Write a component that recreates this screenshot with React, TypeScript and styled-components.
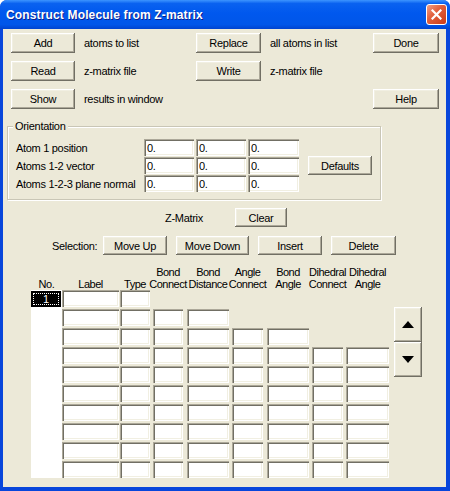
import React from 'react';
import styled, { createGlobalStyle } from 'styled-components';

const FONT = `"Liberation Sans", Arial, sans-serif`;

const GlobalStyle = createGlobalStyle`
  html, body {
    margin: 0;
    padding: 0;
    background: #ffffff;
  }
  body {
    font-family: ${FONT};
    font-size: 11px;
    color: #000;
  }
`;

const Window = styled.div`
  width: 450px;
  height: 491px;
  display: flex;
  flex-direction: column;
  border-radius: 7px 7px 0 0;
  overflow: hidden;
  background: #0846db;
`;

const TitleBar = styled.div`
  height: 29px;
  flex: none;
  display: flex;
  align-items: center;
  padding: 0 3px 0 6px;
  box-sizing: border-box;
  background: linear-gradient(180deg, #3d95ff 0%, #0a62f0 12%, #0058ee 45%, #0056e9 85%, #0043cf 100%);
`;

const TitleText = styled.span`
  flex: 1;
  color: #fff;
  font: bold 12px ${FONT};
  letter-spacing: 0.15px;
  text-shadow: 1px 1px 0 #0f1f8c;
`;

const CloseBox = styled.div`
  width: 21px;
  height: 21px;
  box-sizing: border-box;
  border: 1px solid #fff;
  border-radius: 3px;
  background: linear-gradient(135deg, #f0a088 0%, #e2623f 40%, #cc3a14 100%);
  display: flex;
  align-items: center;
  justify-content: center;
`;

const Frame = styled.div`
  flex: 1;
  display: flex;
  border-style: solid;
  border-color: #0846db;
  border-width: 0 4px 4px 3px;
`;

const Body = styled.div`
  flex: 1;
  background: #ece9d8;
  display: flex;
  flex-direction: column;
  letter-spacing: -0.3px;
`;

const raised = `
  background: #ece9d8;
  border: none;
  box-shadow: inset -1px -1px 0 #716f64, inset 1px 1px 0 #ffffff,
    inset -2px -2px 0 #aca899, inset 2px 2px 0 #f1efe2;
`;

const sunken = `
  background: #ffffff;
  box-shadow: inset 1px 1px 0 #aca899, inset 2px 2px 0 #716f64,
    inset -1px -1px 0 #ffffff, inset -2px -2px 0 #f1efe2;
`;

const Button = styled.button<{ $w?: number; $h?: number }>`
  ${raised}
  width: ${p => (p.$w ? `${p.$w}px` : '100%')};
  height: ${p => p.$h ?? 20}px;
  padding: 0;
  font: 11px ${FONT};
  letter-spacing: -0.3px;
  color: #000;
  display: flex;
  align-items: center;
  justify-content: center;
`;

const TopGrid = styled.div`
  display: grid;
  grid-template-columns: 64px 121px 65px 112px 66px;
  grid-auto-rows: 20px;
  row-gap: 8px;
  align-items: center;
  margin: 4px 0 0 8px;
`;

const Hint = styled.span`
  padding-left: 9px;
  white-space: nowrap;
`;

const GroupBox = styled.div`
  position: relative;
  box-sizing: border-box;
  width: 374px;
  height: 74px;
  margin: 17px 0 0 4px;
  padding: 12px 0 0 8px;
  border: 1px solid #c9c6b6;
  box-shadow: inset 1px 1px 0 #ffffff, 1px 1px 0 #ffffff;
`;

const Legend = styled.span`
  position: absolute;
  top: -7px;
  left: 5px;
  padding: 0 2px;
  line-height: 13px;
  background: #ece9d8;
`;

const OrientGrid = styled.div`
  display: grid;
  grid-template-columns: 126px 50px 50px 51px 71px;
  column-gap: 2px;
  grid-auto-rows: 17px;
  row-gap: 1px;
  align-items: center;
`;

const FieldLabel = styled.span`
  white-space: nowrap;
`;

const Field = styled.input`
  ${sunken}
  border: none;
  box-sizing: border-box;
  width: 100%;
  height: 17px;
  margin: 0;
  padding: 1px 0 0 3px;
  font: 11px ${FONT};
  letter-spacing: -0.3px;
  color: #000;
  outline: none;
`;

const DefaultsSlot = styled.div`
  grid-column: 5;
  grid-row: 2;
  display: flex;
  justify-content: flex-end;
`;

const ZRow = styled.div`
  display: flex;
  align-items: center;
  margin: 8px 0 0 162px;
`;

const ZLabel = styled.span`
  width: 70px;
`;

const SelRow = styled.div`
  display: flex;
  align-items: center;
  gap: 9px;
  margin: 9px 0 0 49px;
`;

const SelLabel = styled.span`
  width: 42px;
`;

const MatrixArea = styled.div`
  display: flex;
  align-items: flex-start;
  margin: 12px 0 0 28px;
`;

const NoColumn = styled.div`
  width: 31px;
  display: flex;
  flex-direction: column;
`;

const NoHeader = styled.div`
  height: 23px;
  display: flex;
  align-items: flex-end;
  justify-content: center;
  line-height: 12px;
`;

const NoList = styled.div`
  height: 188px;
  background: #ffffff;
  padding-top: 1px;
  box-sizing: border-box;
`;

const NoItem = styled.div`
  width: 30px;
  height: 16px;
  background: #000;
  color: #fff;
  display: flex;
  align-items: center;
  justify-content: center;
  outline: 1px dotted #ffffff;
  outline-offset: -3px;
`;

const MatrixGrid = styled.div`
  display: grid;
  grid-template-columns: 58px 33px 34px 45px 35px 45px 34px 43px;
  grid-template-rows: 23px repeat(10, 19px);
`;

const HeadCell = styled.div<{ $w: number }>`
  width: ${p => p.$w}px;
  align-self: end;
  display: flex;
  flex-direction: column;
  align-items: center;
  line-height: 12px;
  white-space: nowrap;
  letter-spacing: -0.5px;
`;

const Cell = styled.div<{ $w: number; $on: boolean }>`
  width: ${p => p.$w}px;
  height: 17px;
  box-sizing: border-box;
  ${p => (p.$on ? sunken : 'background: transparent;')}
`;

const ArrowColumn = styled.div`
  display: flex;
  flex-direction: column;
  margin-left: 5px;
  padding-top: 40px;
`;

const columns: { w: number; head: string[] }[] = [
  { w: 57, head: ['Label'] },
  { w: 30, head: ['Type'] },
  { w: 30, head: ['Bond', 'Connect'] },
  { w: 42, head: ['Bond', 'Distance'] },
  { w: 31, head: ['Angle', 'Connect'] },
  { w: 42, head: ['Bond', 'Angle'] },
  { w: 31, head: ['Dihedral', 'Connect'] },
  { w: 43, head: ['Dihedral', 'Angle'] },
];

const visibleCount = (row: number) => (row === 0 ? 2 : row === 1 ? 4 : row === 2 ? 6 : 8);

const orientRows = ['Atom 1 position', 'Atoms 1-2 vector', 'Atoms 1-2-3 plane normal'];

export default function App() {
  return (
    <>
      <GlobalStyle />
      <Window>
        <TitleBar>
          <TitleText>Construct Molecule from Z-matrix</TitleText>
          <CloseBox>
            <svg width="11" height="11" viewBox="0 0 11 11">
              <path d="M1.5 1.5 L9.5 9.5 M9.5 1.5 L1.5 9.5" stroke="#fff" strokeWidth="2.2" strokeLinecap="square" />
            </svg>
          </CloseBox>
        </TitleBar>
        <Frame>
          <Body>
            <TopGrid>
              <Button>Add</Button>
              <Hint>atoms to list</Hint>
              <Button>Replace</Button>
              <Hint>all atoms in list</Hint>
              <Button>Done</Button>

              <Button>Read</Button>
              <Hint>z-matrix file</Hint>
              <Button>Write</Button>
              <Hint>z-matrix file</Hint>
              <span />

              <Button>Show</Button>
              <Hint>results in window</Hint>
              <span />
              <span />
              <Button>Help</Button>
            </TopGrid>

            <GroupBox>
              <Legend>Orientation</Legend>
              <OrientGrid>
                {orientRows.map((label, r) => (
                  <React.Fragment key={label}>
                    <FieldLabel style={{ gridRow: r + 1 }}>{label}</FieldLabel>
                    {[0, 1, 2].map(c => (
                      <Field key={c} style={{ gridRow: r + 1 }} defaultValue="0." readOnly />
                    ))}
                  </React.Fragment>
                ))}
                <DefaultsSlot>
                  <Button $w={64} $h={19}>Defaults</Button>
                </DefaultsSlot>
              </OrientGrid>
            </GroupBox>

            <ZRow>
              <ZLabel>Z-Matrix</ZLabel>
              <Button $w={52} $h={19}>Clear</Button>
            </ZRow>

            <SelRow>
              <SelLabel>Selection:</SelLabel>
              <Button $w={64} $h={19}>Move Up</Button>
              <Button $w={73} $h={19}>Move Down</Button>
              <Button $w={64} $h={19}>Insert</Button>
              <Button $w={65} $h={19}>Delete</Button>
            </SelRow>

            <MatrixArea>
              <NoColumn>
                <NoHeader>No.</NoHeader>
                <NoList>
                  <NoItem>1</NoItem>
                </NoList>
              </NoColumn>
              <MatrixGrid>
                {columns.map(col => (
                  <HeadCell key={col.head.join('-')} $w={col.w}>
                    {col.head.map(line => (
                      <span key={line}>{line}</span>
                    ))}
                  </HeadCell>
                ))}
                {Array.from({ length: 10 }).map((_, r) =>
                  columns.map((col, c) => (
                    <Cell key={`${r}-${c}`} $w={col.w} $on={c < visibleCount(r)} />
                  ))
                )}
              </MatrixGrid>
              <ArrowColumn>
                <Button $w={28} $h={35}>
                  <svg width="12" height="7" viewBox="0 0 12 7">
                    <polygon points="6,0 12,7 0,7" fill="#000" />
                  </svg>
                </Button>
                <Button $w={28} $h={35}>
                  <svg width="12" height="7" viewBox="0 0 12 7">
                    <polygon points="0,0 12,0 6,7" fill="#000" />
                  </svg>
                </Button>
              </ArrowColumn>
            </MatrixArea>
          </Body>
        </Frame>
      </Window>
    </>
  );
}
